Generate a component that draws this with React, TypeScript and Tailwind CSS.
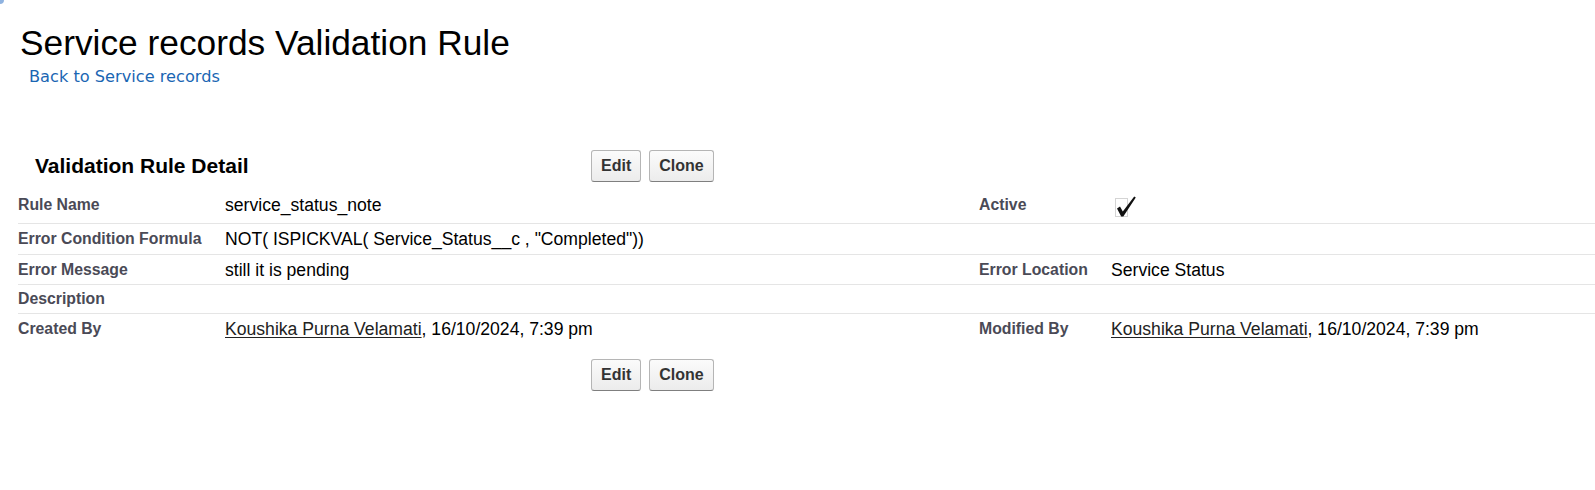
import React from "react";

type Field = { label: string; value?: React.ReactNode };
type Row = { h: string; left: Field; right?: Field; border: boolean };

// checked-box image: dotted outline with a heavy tick
const Check = () => (
  <svg width="24" height="22" viewBox="0 0 24 22" className="block relative top-[2px] ml-[3px]">
    <rect x="1.5" y="2.5" width="12" height="18" fill="none" stroke="#a8a8a8" strokeWidth="1" strokeDasharray="1 1" />
    <polygon points="3,12.5 6,10.5 8.8,15.5 20.2,0.5 21.8,1.6 9.3,20.5 7.2,20.5" fill="#111" />
  </svg>
);

const UserStamp = () => (
  <>
    <a href="#" className="underline text-[#222] decoration-[#222] underline-offset-[2px]">
      Koushika Purna Velamati
    </a>
    , 16/10/2024, 7:39 pm
  </>
);

const rows: Row[] = [
  { h: "h-[34px] pb-[3px]", left: { label: "Rule Name", value: "service_status_note" }, right: { label: "Active", value: <Check /> }, border: true },
  { h: "h-[31px]", left: { label: "Error Condition Formula", value: 'NOT( ISPICKVAL( Service_Status__c , "Completed"))' }, border: true },
  { h: "h-[30px]", left: { label: "Error Message", value: "still it is pending" }, right: { label: "Error Location", value: "Service Status" }, border: true },
  { h: "h-[29px]", left: { label: "Description" }, border: true },
  { h: "h-[30px]", left: { label: "Created By", value: <UserStamp /> }, right: { label: "Modified By", value: <UserStamp /> }, border: false },
];

const Btn = ({ children }: { children: React.ReactNode }) => (
  <button className="h-[32px] px-[9px] rounded-[3px] border border-[#b5b5b5] border-b-[#7f7f7f] bg-gradient-to-b from-[#fbfbfb] to-[#ececec] text-[16px] font-bold text-[#333] leading-[18px]">
    {children}
  </button>
);

const Buttons = () => (
  <div className="flex gap-[8px]">
    <Btn>Edit</Btn>
    <Btn>Clone</Btn>
  </div>
);

export default function App() {
  return (
    <div className="relative w-[1595px] h-[490px] bg-white font-['Liberation_Sans',Arial,sans-serif] overflow-hidden">
      <div className="absolute left-0 top-0 w-[4px] h-[4px] rounded-br-[4px] bg-[#8fb3e0]" />
      <h1 className="pl-[20px] pt-[23px] text-[35.3px] leading-[40px] text-black font-normal">
        Service records Validation Rule
      </h1>
      <a href="#" className="block mt-[4px] ml-[29px] w-fit font-['DejaVu_Sans',Verdana,sans-serif] text-[16.2px] leading-[19px] text-[#1a66b3]">
        Back to Service records
      </a>

      <div className="mt-[64px] flex items-center h-[32px]">
        <h2 className="w-[591px] pl-[35px] text-[21px] font-bold text-black">Validation Rule Detail</h2>
        <Buttons />
      </div>

      <div className="mt-[8px] ml-[18px]">
        {rows.map((r, i) => (
          <div key={i} className={`flex items-center ${r.h} ${r.border ? "border-b border-[#e5e5e5]" : ""}`}>
            <div className="w-[207px] shrink-0 text-[15.8px] font-bold text-[#4a4a56] leading-[18px]">{r.left.label}</div>
            <div className="w-[754px] shrink-0 text-[17.6px] text-black leading-[18px]">{r.left.value}</div>
            <div className="w-[132px] shrink-0 text-[15.8px] font-bold text-[#4a4a56] leading-[18px]">{r.right?.label}</div>
            <div className="flex-1 text-[17.6px] text-black leading-[18px]">{r.right?.value}</div>
          </div>
        ))}
      </div>

      <div className="mt-[15px] pl-[591px]">
        <Buttons />
      </div>
    </div>
  );
}
